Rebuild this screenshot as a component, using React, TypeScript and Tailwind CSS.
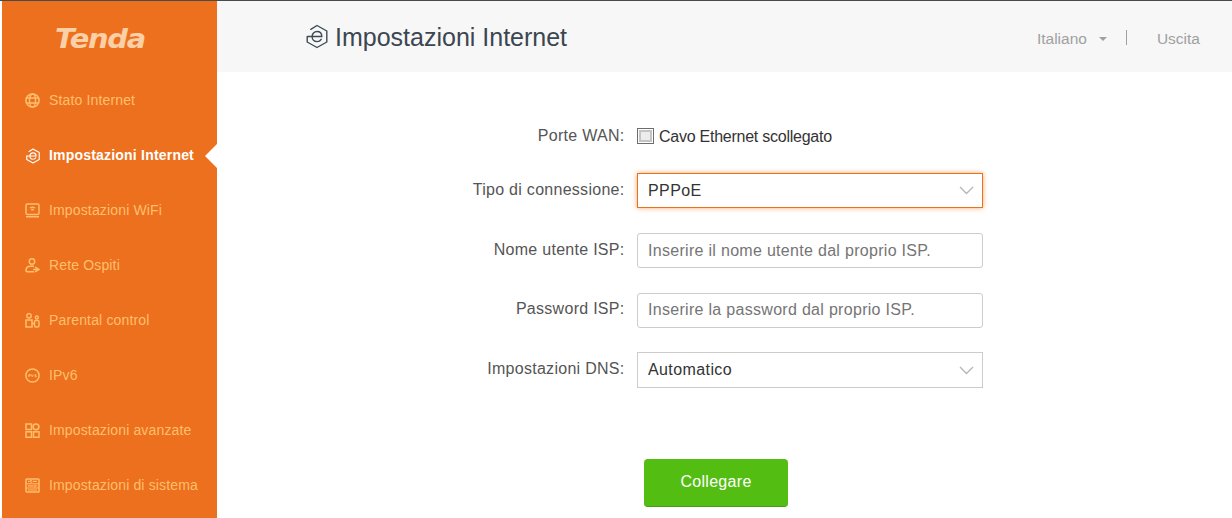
import React from "react";

const S = { fill: "none", stroke: "currentColor", strokeWidth: 1.5 };

function HexE({ width, height, w = 1.3 }: { width: number; height: number; w?: number }) {
  return (
    <svg width={width} height={height} viewBox="0 0 22 25" fill="none" stroke="currentColor" strokeWidth={w}>
      <path d="M4.800 5.300 11 1.500l9.800 5.500v11L11 23.500 1.200 18v-5.300" strokeLinecap="round" strokeLinejoin="round" />
      <path d="M1.500 12.500h14.300c0-3-2-5-4.800-5s-4.900 2.200-4.900 5.100 2.100 5 4.900 5c1.800 0 3.300-.8 4.200-2.300" strokeLinecap="round" />
    </svg>
  );
}

const Globe = () => (
  <svg width="15" height="15" viewBox="0 0 15 15" {...S}>
    <circle cx="7.500" cy="7.500" r="6.600" />
    <ellipse cx="7.500" cy="7.500" rx="3" ry="6.600" />
    <path d="M1.500 5h12M1.500 10h12" />
  </svg>
);
const Wifi = () => (
  <svg width="15" height="15" viewBox="0 0 15 15" {...S}>
    <rect x="1" y="1" width="13" height="10.500" rx="1.500" />
    <path d="M1 13.800h13M5 5c1.500-1 3.500-1 5 0M6.200 7c.8-.5 1.800-.5 2.600 0" />
  </svg>
);
const Guest = () => (
  <svg width="15" height="15" viewBox="0 0 15 15" {...S}>
    <circle cx="7" cy="3.500" r="2.700" />
    <path d="M1 12.500c0-2.600 2-4.200 4.500-4.200h3.500M9 13.800H3c-1.200 0-2-.5-2-1.300M10 9.200l4 2.300-4 2.300M8 11.500h5" />
  </svg>
);
const Parental = () => (
  <svg width="15" height="15" viewBox="0 0 15 15" {...S}>
    <circle cx="4" cy="2.800" r="2.200" />
    <circle cx="11.800" cy="4.500" r="1.500" />
    <rect x="1" y="7" width="6" height="7" />
    <path d="M7 10.500h2" />
    <rect x="9.500" y="7.500" width="4.500" height="6.500" rx="1.500" />
  </svg>
);
const Ipv6 = () => (
  <svg width="15" height="15" viewBox="0 0 15 15" {...S}>
    <circle cx="7.500" cy="7.500" r="6.600" />
    <path d="M3.800 9V6.500h1.500v1.300H3.800M6.300 6.500l1 2.300 1-2.300M11.200 6.500h-1.100v2.400h1.100V7.700h-1.100" strokeWidth="0.900" />
  </svg>
);
const Grid = () => (
  <svg width="15" height="15" viewBox="0 0 15 15" {...S}>
    <rect x="1" y="1" width="5.500" height="5.500" />
    <circle cx="11" cy="3.800" r="2.900" />
    <rect x="1" y="8.800" width="5.500" height="5.500" />
    <rect x="8.500" y="8.800" width="5.500" height="5.500" />
  </svg>
);
const System = () => (
  <svg width="15" height="15" viewBox="0 0 15 15" {...S}>
    <rect x="1" y="1" width="13" height="13" rx="0.800" />
    <path d="M1 5.800h13M1 10h13M3 3.400h1.500M8 3.400h4M3 7.900h5M11.500 7.900h.8M3 12h9" strokeWidth="1.100" />
    <circle cx="6" cy="3.400" r="1" strokeWidth="1" />
    <circle cx="9.800" cy="7.900" r="1" strokeWidth="1" />
  </svg>
);

const nav = [
  { label: "Stato Internet", icon: <Globe /> },
  { label: "Impostazioni Internet", icon: <HexE width={14} height={16} w={1.800} />, active: true },
  { label: "Impostazioni WiFi", icon: <Wifi /> },
  { label: "Rete Ospiti", icon: <Guest /> },
  { label: "Parental control", icon: <Parental /> },
  { label: "IPv6", icon: <Ipv6 /> },
  { label: "Impostazioni avanzate", icon: <Grid /> },
  { label: "Impostazioni di sistema", icon: <System /> },
];

const Chevron = () => (
  <svg width="15" height="9" viewBox="0 0 15 9" fill="none" stroke="#b5b5b5" strokeWidth="1.300">
    <path d="M1 1l6.500 6.500L14 1" />
  </svg>
);

function Row({ label, children, cls }: { label: string; children: React.ReactNode; cls: string }) {
  return (
    <div className={`flex items-center ${cls}`}>
      <div className="w-[420px] text-right text-[16px] tracking-[0.280px] text-[#555555] pr-[12.500px] pb-[2px] shrink-0">{label}</div>
      {children}
    </div>
  );
}

export default function App() {
  return (
    <div className="h-[518px] w-[1232px] overflow-hidden bg-white flex flex-col font-['Liberation_Sans',Arial,sans-serif]">
      <div className="h-px bg-[#4a4a4a] shrink-0" />
      <div className="flex flex-1 min-h-0">
        <aside className="ml-[2px] w-[215px] shrink-0 bg-[#ed701e] flex flex-col">
          <div className="h-[72.400px] shrink-0 pl-[53px] pt-[23px]">
            <span className="text-[#fbd0a6] text-[27px] leading-[30px] font-bold italic tracking-[-1.200px] font-['DejaVu_Sans',sans-serif] inline-block scale-x-[1.070] origin-left">
              Tenda
            </span>
          </div>
          {nav.map((n) => (
            <div
              key={n.label}
              className={`relative h-[55px] shrink-0 flex items-center pl-[23px] gap-[9px] text-[14px] whitespace-nowrap ${
                n.active ? "text-white font-bold" : "text-[#ffbf6c]"
              }`}
            >
              <span className="w-[15px] h-[15px] flex items-center justify-center shrink-0">{n.icon}</span>
              <span className={n.active ? "tracking-[0.200px]" : "tracking-[0.150px]"}>{n.label}</span>
              {n.active && (
                <span className="absolute right-0 top-1/2 -translate-y-1/2 w-0 h-0 border-y-[12px] border-y-transparent border-r-[12px] border-r-white" />
              )}
            </div>
          ))}
        </aside>
        <main className="flex-1 min-w-0 flex flex-col">
          <header className="h-[71px] shrink-0 bg-[#f7f7f7] flex items-center pl-[89px] pr-[32px]">
            <span className="text-[#3d4a54] mr-[7px] mb-[1px]">
              <HexE width={22} height={25} w={1.400} />
            </span>
            <h1 className="text-[25px] leading-[30px] text-[#3b4650] font-normal mt-[1px]">Impostazioni Internet</h1>
            <div className="ml-auto flex items-center text-[#a0a0a0] text-[15.500px] mt-[5px]">
              <span>Italiano</span>
              <span className="ml-[12px] w-0 h-0 border-x-[4px] border-x-transparent border-t-[4px] border-t-[#a0a0a0]" />
              <span className="ml-[19px] mb-[3px] w-px h-[15px] bg-[#a0a0a0]" />
              <span className="ml-[30px]">Uscita</span>
            </div>
          </header>
          <div className="flex flex-col pt-[55px]">
            <Row label="Porte WAN:" cls="h-[20px]">
              <span className="flex items-center text-[#333333] text-[16px] tracking-[-0.250px]">
                <span className="w-[17px] h-[16px] mr-[5px] mb-[3px] border border-[#6d6d6d] bg-white flex items-center justify-center">
                  <span className="w-[13px] h-[12px] border-2 border-[#c4c4c4] bg-[#ececec]" />
                </span>
                Cavo Ethernet scollegato
              </span>
            </Row>
            <Row label="Tipo di connessione:" cls="mt-[26px] h-[35px]">
              <div className="w-[346px] h-[35px] bg-white border border-[#e8731f] shadow-[0_0_5px_#f6a86d] flex items-center justify-between pl-[10px] pr-[8px] text-[16px] tracking-[0.400px] text-[#333333]">
                PPPoE
                <Chevron />
              </div>
            </Row>
            <Row label="Nome utente ISP:" cls="mt-[25px] h-[35px]">
              <input
                readOnly
                placeholder="Inserire il nome utente dal proprio ISP."
                className="w-[346px] h-[35px] rounded-[3px] border border-[#cccccc] px-[10px] text-[16px] tracking-[0.300px] outline-none placeholder:text-[#757575]"
              />
            </Row>
            <Row label="Password ISP:" cls="mt-[24.500px] h-[35px]">
              <input
                readOnly
                placeholder="Inserire la password dal proprio ISP."
                className="w-[346px] h-[35px] rounded-[3px] border border-[#cccccc] px-[10px] text-[16px] tracking-[0.300px] outline-none placeholder:text-[#757575]"
              />
            </Row>
            <Row label="Impostazioni DNS:" cls="mt-[24.500px] h-[36px]">
              <div className="w-[346px] h-[36px] bg-white border border-[#cccccc] flex items-center justify-between pl-[10px] pr-[8px] text-[16px] tracking-[0.400px] text-[#333333]">
                Automatico
                <Chevron />
              </div>
            </Row>
            <div className="mt-[71px] pl-[427px]">
              <button className="w-[144px] h-[48px] rounded-[4px] bg-[#54bd12] border-b border-[#4a9e15] text-white text-[16px] tracking-[0.300px] pb-[2px]">
                Collegare
              </button>
            </div>
          </div>
        </main>
      </div>
    </div>
  );
}
